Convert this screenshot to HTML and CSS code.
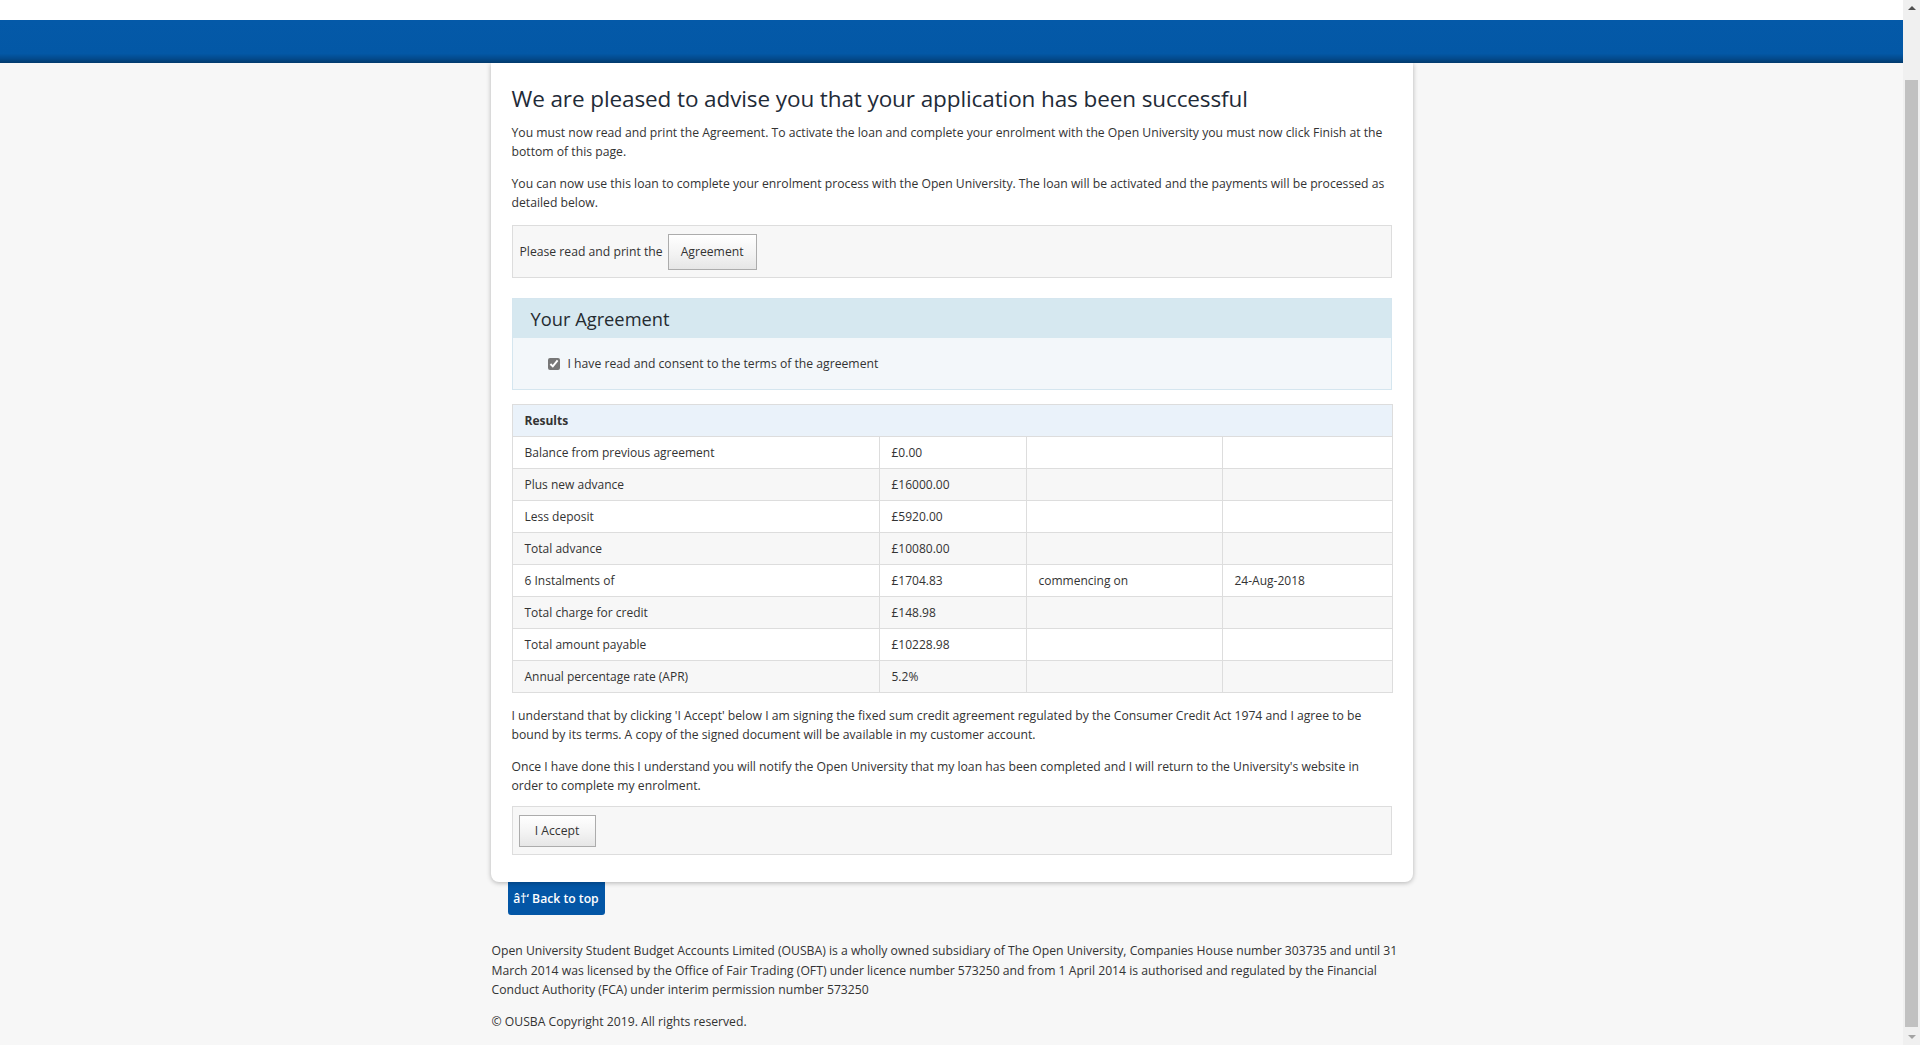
FILE: index.html
```html
<!DOCTYPE html>
<html lang="en">
<head>
<meta charset="utf-8">
<title>Application successful</title>
<link rel="stylesheet" href="styles.css">
</head>
<body>
<div class="viewport">
  <div class="page">
    <div class="topstrip"></div>
    <header class="brandbar"></header>
    <main class="card">
      <h1 class="title">We are pleased to advise you that your application has been successful</h1>
      <p class="para">You must now read and print the Agreement. To activate the loan and complete your enrolment with the Open University you must now click Finish at the bottom of this page.</p>
      <p class="para">You can now use this loan to complete your enrolment process with the Open University. The loan will be activated and the payments will be processed as detailed below.</p>

      <div class="well well-print">
        <span class="well-label">Please read and print the</span>
        <button class="btn btn-agreement" type="button">Agreement</button>
      </div>

      <section class="agree-panel">
        <div class="agree-head">Your Agreement</div>
        <div class="agree-body">
          <label class="check-row"><input type="checkbox" class="check" checked> I have read and consent to the terms of the agreement</label>
        </div>
      </section>

      <table class="results">
        <colgroup>
          <col class="c1"><col class="c2"><col class="c3"><col class="c4">
        </colgroup>
        <thead>
          <tr><th colspan="4">Results</th></tr>
        </thead>
        <tbody>
          <tr><td>Balance from previous agreement</td><td>£0.00</td><td></td><td></td></tr>
          <tr><td>Plus new advance</td><td>£16000.00</td><td></td><td></td></tr>
          <tr><td>Less deposit</td><td>£5920.00</td><td></td><td></td></tr>
          <tr><td>Total advance</td><td>£10080.00</td><td></td><td></td></tr>
          <tr><td>6 Instalments of</td><td>£1704.83</td><td>commencing on</td><td>24-Aug-2018</td></tr>
          <tr><td>Total charge for credit</td><td>£148.98</td><td></td><td></td></tr>
          <tr><td>Total amount payable</td><td>£10228.98</td><td></td><td></td></tr>
          <tr><td>Annual percentage rate (APR)</td><td>5.2%</td><td></td><td></td></tr>
        </tbody>
      </table>

      <p class="para">I understand that by clicking 'I Accept' below I am signing the fixed sum credit agreement regulated by the Consumer Credit Act 1974 and I agree to be bound by its terms. A copy of the signed document will be available in my customer account.</p>
      <p class="para para-last">Once I have done this I understand you will notify the Open University that my loan has been completed and I will return to the University's website in order to complete my enrolment.</p>

      <div class="well well-accept">
        <button class="btn btn-accept" type="button">I Accept</button>
      </div>
    </main>

    <div class="backtop-wrap">
      <a class="backtop" href="#">â†‘ Back to top</a>
    </div>

    <footer class="footer">
      <p class="foot-p">Open University Student Budget Accounts Limited (OUSBA) is a wholly owned subsidiary of The Open University, Companies House number 303735 and until 31 March 2014 was licensed by the Office of Fair Trading (OFT) under licence number 573250 and from 1 April 2014 is authorised and regulated by the Financial Conduct Authority (FCA) under interim permission number 573250</p>
      <p class="foot-p">© OUSBA Copyright 2019. All rights reserved.</p>
    </footer>
  </div>

  <div class="scrollbar">
    <div class="sb-arrow sb-up"></div>
    <div class="sb-track"><div class="sb-thumb"></div></div>
    <div class="sb-arrow sb-down"></div>
  </div>
</div>
</body>
</html>
```

FILE: styles.css
```css
* { box-sizing: border-box; }

html, body {
  margin: 0;
  padding: 0;
  height: 100%;
  overflow: hidden;
}

body {
  background: #f7f7f7;
  color: #333;
  font-family: "Open Sans", "Noto Sans", "DejaVu Sans", sans-serif;
  font-size: 12.2px;
  line-height: 19px;
}

.viewport {
  display: flex;
  height: 1045px;
}

.page {
  flex: 1;
  min-width: 0;
  display: flex;
  flex-direction: column;
  align-items: center;
}

.topstrip {
  align-self: stretch;
  height: 20px;
  background: #ffffff;
}

.brandbar {
  align-self: stretch;
  height: 43px;
  background: linear-gradient(to bottom, #0459a8 0%, #0358a6 78%, #034a8c 90%, #023a6c 100%);
  position: relative;
  z-index: 2;
}

.card {
  width: 922px;
  background: #ffffff;
  padding: 22px 21px 27px;
  border-radius: 0 0 8px 8px;
  box-shadow: 0 1px 5px rgba(0,0,0,0.28);
  position: relative;
  z-index: 1;
}

.title {
  margin: 0 0 10px;
  font-family: "Open Sans", "Noto Sans", sans-serif;
  font-weight: 400;
  font-size: 22.5px;
  line-height: 28px;
  color: #1f2b38;
  letter-spacing: -0.1px;
}

.para {
  margin: 0 0 13px;
}

.para-last {
  margin-bottom: 11px;
}

.well {
  background: #f7f7f7;
  border: 1px solid #dddddd;
}

.well-print {
  display: flex;
  align-items: center;
  height: 53px;
  padding: 0 7px;
  margin-top: 12px;
}

.well-label {
  margin-right: 5px;
}

.btn {
  font-family: inherit;
  font-size: 12.2px;
  color: #333;
  background: linear-gradient(to bottom, #ffffff 0%, #f3f3f3 55%, #e6e6e6 100%);
  border: 1px solid #acacac;
  border-radius: 0;
  padding: 0 11px;
  cursor: pointer;
}

.btn-agreement {
  height: 36px;
  width: 89px;
  padding: 0;
}

.agree-panel {
  margin-top: 20px;
  border: 1px solid #d5e6ef;
}

.agree-head {
  height: 39px;
  background: #d6e8f0;
  padding-left: 18px;
  display: flex;
  align-items: center;
  font-size: 18.3px;
  color: #252b30;
}

.agree-body {
  height: 51px;
  background: #f3f7fa;
  display: flex;
  align-items: center;
  padding-left: 35px;
}

.check-row {
  display: flex;
  align-items: center;
  color: #333;
}

.check {
  width: 12px;
  height: 12px;
  margin: 0 8px 0 0;
  accent-color: #777;
}

.results {
  width: 100%;
  margin-top: 14px;
  border-collapse: collapse;
  border: 1px solid #dddddd;
  table-layout: fixed;
  font-size: 12px;
}

.results col.c1 { width: 367px; }
.results col.c2 { width: 147px; }
.results col.c3 { width: 196px; }
.results col.c4 { width: 170px; }

.results th {
  height: 32px;
  background: #eaf2fa;
  text-align: left;
  font-weight: 700;
  padding: 0 12px;
  border-bottom: 1px solid #dddddd;
  color: #333;
}

.results td {
  height: 32px;
  padding: 0 12px;
  border: 1px solid #dddddd;
  vertical-align: middle;
}

.results tbody tr:nth-child(odd) td { background: #ffffff; }
.results tbody tr:nth-child(even) td { background: #f7f7f7; }

.results + .para {
  margin-top: 13px;
}

.well-accept {
  height: 49px;
  padding: 7px 6px;
  display: flex;
  align-items: center;
}

.btn-accept {
  height: 32px;
  width: 77px;
  padding: 0;
}

.backtop-wrap {
  width: 922px;
  padding-left: 17px;
}

.backtop {
  display: inline-flex;
  align-items: center;
  justify-content: center;
  width: 97px;
  height: 33px;
  background: #0356a6;
  color: #ffffff;
  font-weight: 600;
  font-size: 12.2px;
  text-decoration: none;
  border-radius: 0 0 3px 3px;
}

.footer {
  width: 922px;
  margin-top: 26px;
  padding-left: 1px;
}

.foot-p {
  margin: 0 0 12px;
  line-height: 19.5px;
}

/* fake scrollbar */
.scrollbar {
  width: 17px;
  height: 1045px;
  background: #f0f0f0;
  display: flex;
  flex-direction: column;
}

.sb-arrow {
  height: 17px;
  position: relative;
}

.sb-up::after,
.sb-down::after {
  content: "";
  position: absolute;
  left: 5px;
  border-left: 4px solid transparent;
  border-right: 4px solid transparent;
}

.sb-up::after {
  top: 6px;
  border-bottom: 4px solid #505050;
}

.sb-down::after {
  top: 7px;
  border-top: 4px solid #a3a3a3;
}

.sb-track {
  flex: 1;
  padding: 63px 2px 0 2px;
}

.sb-thumb {
  height: 947px;
  background: #c1c1c1;
}
```
